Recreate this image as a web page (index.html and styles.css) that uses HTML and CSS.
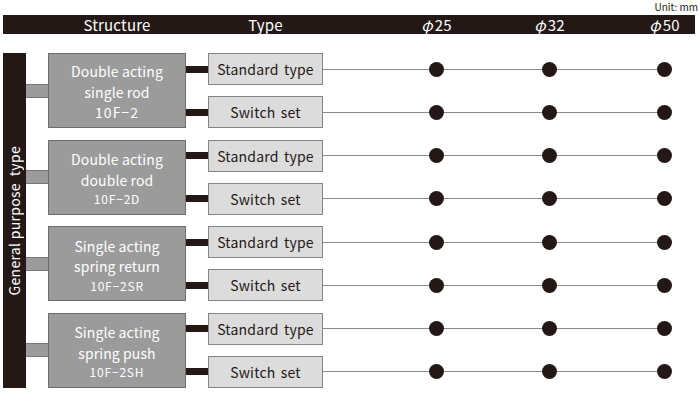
FILE: index.html
```html
<!DOCTYPE html>
<html>
<head>
<meta charset="utf-8">
<link rel="stylesheet" href="styles.css">
</head>
<body>
<div class="unit">Unit: mm</div>
<div class="head">
  <div class="hc c-struct">Structure</div>
  <div class="hc c-type">Type</div>
  <div class="hc c-d1"><span class="phi">φ</span>25</div>
  <div class="hc c-d2"><span class="phi">φ</span>32</div>
  <div class="hc c-d3"><span class="phi">φ</span>50</div>
</div>
<div class="main">
  <div class="vbar"><span class="vtext">General purpose&nbsp;&nbsp;type</span></div>
  <div class="groups">
    <div class="group">
      <div class="stub"></div>
      <div class="sbox"><span>Double acting</span><span>single rod</span><span class="big">10F−2</span></div>
      <div class="types">
        <div class="row"><div class="link"></div><div class="tbox">Standard type</div><div class="track"><i class="s1"></i><b></b><i class="s2"></i><b></b><i class="s3"></i><b></b></div></div>
        <div class="row"><div class="link"></div><div class="tbox">Switch set</div><div class="track"><i class="s1"></i><b></b><i class="s2"></i><b></b><i class="s3"></i><b></b></div></div>
      </div>
    </div>
    <div class="group">
      <div class="stub"></div>
      <div class="sbox"><span>Double acting</span><span>double rod</span><span class="code">10F−2D</span></div>
      <div class="types">
        <div class="row"><div class="link"></div><div class="tbox">Standard type</div><div class="track"><i class="s1"></i><b></b><i class="s2"></i><b></b><i class="s3"></i><b></b></div></div>
        <div class="row"><div class="link"></div><div class="tbox">Switch set</div><div class="track"><i class="s1"></i><b></b><i class="s2"></i><b></b><i class="s3"></i><b></b></div></div>
      </div>
    </div>
    <div class="group">
      <div class="stub"></div>
      <div class="sbox"><span>Single acting</span><span>spring return</span><span class="code">10F−2SR</span></div>
      <div class="types">
        <div class="row"><div class="link"></div><div class="tbox">Standard type</div><div class="track"><i class="s1"></i><b></b><i class="s2"></i><b></b><i class="s3"></i><b></b></div></div>
        <div class="row"><div class="link"></div><div class="tbox">Switch set</div><div class="track"><i class="s1"></i><b></b><i class="s2"></i><b></b><i class="s3"></i><b></b></div></div>
      </div>
    </div>
    <div class="group">
      <div class="stub"></div>
      <div class="sbox"><span>Single acting</span><span>spring push</span><span class="code">10F−2SH</span></div>
      <div class="types">
        <div class="row"><div class="link"></div><div class="tbox">Standard type</div><div class="track"><i class="s1"></i><b></b><i class="s2"></i><b></b><i class="s3"></i><b></b></div></div>
        <div class="row"><div class="link"></div><div class="tbox">Switch set</div><div class="track"><i class="s1"></i><b></b><i class="s2"></i><b></b><i class="s3"></i><b></b></div></div>
      </div>
    </div>
  </div>
</div>
</body>
</html>
```

FILE: styles.css
```css
* { box-sizing: border-box; }
html, body { margin: 0; padding: 0; background: #fff; }
body {
  width: 700px;
  height: 402px;
  overflow: hidden;
  font-family: "Noto Sans CJK JP", "Noto Sans", sans-serif;
  color: #231815;
}
.unit {
  height: 15px;
  line-height: 13px;
  font-size: 10px;
  text-align: right;
  padding-right: 2px;
}
.head {
  margin-left: 3px;
  width: 692px;
  height: 19px;
  background: #231815;
  color: #fff;
  display: grid;
  grid-template-columns: 45px 138px 22px 115px 83.5px 60px 53px 60px 55px 60px;
  align-items: center;
  font-size: 15px;
  line-height: 19px;
}
.hc { text-align: center; white-space: nowrap; letter-spacing: 0.2px; }
.c-struct { grid-column: 2; }
.c-type { grid-column: 4; }
.c-d1 { grid-column: 6; }
.c-d2 { grid-column: 8; }
.c-d3 { grid-column: 10; }
.phi { font-style: italic; margin-right: 2px; }
.main {
  margin-top: 19px;
  display: flex;
  align-items: flex-start;
}
.vbar {
  margin-left: 3px;
  width: 23px;
  height: 335px;
  background: #231815;
  color: #fff;
  display: flex;
  align-items: center;
  justify-content: center;
}
.vtext {
  writing-mode: vertical-rl;
  transform: rotate(180deg);
  font-size: 14px;
  line-height: 23px;
  white-space: pre;
  letter-spacing: 0.3px;
}
.groups {
  display: flex;
  flex-direction: column;
  gap: 11.5px;
}
.group {
  display: flex;
  align-items: center;
  height: 75px;
}
.stub {
  width: 22px;
  height: 14px;
  background: #9b9b9b;
  border: 1px solid #777;
  border-left: none;
  border-right: none;
}
.sbox {
  width: 138px;
  height: 75px;
  background: #9b9b9b;
  border: 1px solid #6e6e6e;
  color: #fff;
  display: flex;
  flex-direction: column;
  align-items: center;
  justify-content: center;
  font-size: 14px;
  line-height: 20.5px;
  letter-spacing: 0.1px;
  padding-top: 3px;
}
.sbox .code { font-size: 12px; line-height: 18px; letter-spacing: 0.8px; }
.sbox .big { letter-spacing: 1px; }
.types {
  height: 75px;
  display: flex;
  flex-direction: column;
  justify-content: space-between;
}
.row {
  height: 32px;
  display: flex;
  align-items: center;
}
.link {
  width: 22px;
  height: 7px;
  background: #231815;
}
.tbox {
  width: 115px;
  height: 32px;
  background: #dcdcdc;
  border: 1px solid #858585;
  font-size: 14px;
  line-height: 30px;
  letter-spacing: 0.2px;
  word-spacing: 2px;
  text-align: center;
  color: #231815;
  white-space: nowrap;
}
.track {
  display: flex;
  align-items: center;
}
.track i {
  display: block;
  height: 1px;
  background: #8a8a8a;
}
.track .s1 { width: 106px; }
.track .s2 { width: 98px; }
.track .s3 { width: 100px; }
.track b {
  display: block;
  width: 15px;
  height: 15px;
  border-radius: 50%;
  background: #231815;
}
```
